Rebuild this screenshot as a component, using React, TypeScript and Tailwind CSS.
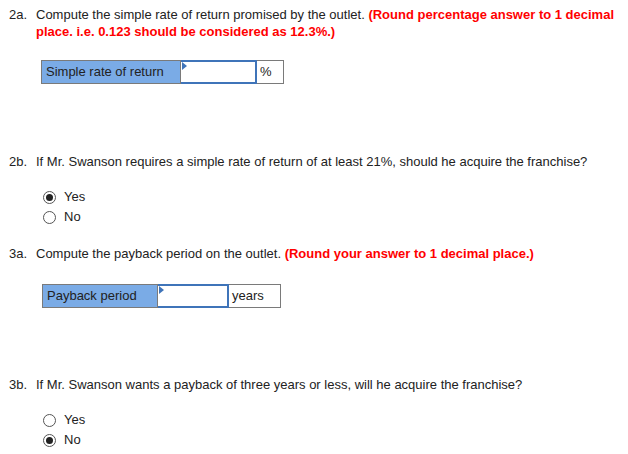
import React from 'react'

const font = { fontFamily: '"Liberation Sans", Arial, sans-serif' }

function Question({ num, children }: { num: string; children: React.ReactNode }) {
  return (
    <div className="flex text-[13px] leading-[17px] text-[#222]">
      <span className="w-[36px] shrink-0 pl-[9px]">{num}</span>
      <div className="flex-1">{children}</div>
    </div>
  )
}

function AnswerRow({ label, labelW, inputW, unit, unitW }: { label: string; labelW: number; inputW: number; unit: string; unitW: number }) {
  return (
    <div className="flex h-[24px] text-[13px] text-[#222]">
      <div
        className="flex items-center border border-[#7a7a7a] bg-[#7aabe6] pl-[4px]"
        style={{ width: labelW }}
      >
        {label}
      </div>
      <div className="relative border-2 border-l-0 border-[#3f74b9] bg-white" style={{ width: inputW }}>
        <span className="absolute left-[1px] top-[0px] h-0 w-0 border-y-[4px] border-l-[5px] border-y-transparent border-l-[#3f74b9]" />
      </div>
      <div
        className="flex items-center border border-l-0 border-[#7a7a7a] bg-white pl-[3px]"
        style={{ width: unitW }}
      >
        {unit}
      </div>
    </div>
  )
}

function Radio({ label, checked }: { label: string; checked?: boolean }) {
  return (
    <div className="flex h-[20px] items-center text-[13px] text-[#222]">
      <span className="flex h-[13px] w-[13px] items-center justify-center rounded-full border border-[#555] bg-white">
        {checked && <span className="h-[7px] w-[7px] rounded-full bg-[#222]" />}
      </span>
      <span className="ml-[8px]">{label}</span>
    </div>
  )
}

export default function App() {
  return (
    <div className="h-[454px] w-[628px] bg-white pt-[6px]" style={font}>
      <Question num="2a.">
        Compute the simple rate of return promised by the outlet.{' '}
        <span className="font-bold text-[#ff0000]">
          (Round percentage answer to 1 decimal place. i.e. 0.123 should be considered as 12.3%.)
        </span>
      </Question>

      <div className="ml-[41px] mt-[20px]">
        <AnswerRow label="Simple rate of return" labelW={140} inputW={76} unit="%" unitW={27} />
      </div>

      <div className="mt-[69px]">
        <Question num="2b.">
          If Mr. Swanson requires a simple rate of return of at least 21%, should he acquire the franchise?
        </Question>
      </div>

      <div className="ml-[43px] mt-[17px]">
        <Radio label="Yes" checked />
        <Radio label="No" />
      </div>

      <div className="mt-[18px]">
        <Question num="3a.">
          Compute the payback period on the outlet.{' '}
          <span className="font-bold text-[#ff0000]">(Round your answer to 1 decimal place.)</span>
        </Question>
      </div>

      <div className="ml-[42px] mt-[22px]">
        <AnswerRow label="Payback period" labelW={116} inputW={71} unit="years" unitW={52} />
      </div>

      <div className="mt-[68px]">
        <Question num="3b.">
          If Mr. Swanson wants a payback of three years or less, will he acquire the franchise?
        </Question>
      </div>

      <div className="ml-[43px] mt-[17px]">
        <Radio label="Yes" />
        <Radio label="No" checked />
      </div>
    </div>
  )
}
